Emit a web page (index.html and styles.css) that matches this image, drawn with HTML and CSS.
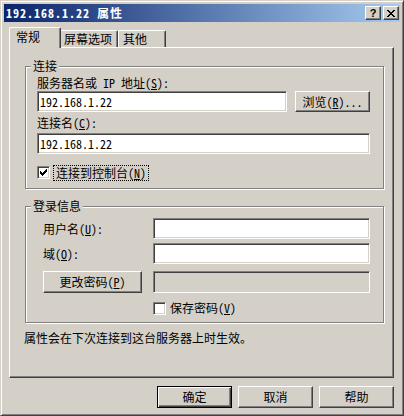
FILE: index.html
```html
<!DOCTYPE html>
<html lang="zh-CN">
<head>
    <meta charset="UTF-8">
    <title>192.168.1.22 属性</title>
    <link rel="stylesheet" href="styles.css">
</head>
<body>
    <div class="window">
        <div class="titlebar">
            <span class="title">192.168.1.22 属性</span>
            <div class="caption-buttons">
                <button class="caption-btn">?</button>
                <button class="caption-btn">
                    <svg width="8" height="7" viewBox="0 0 8 7" shape-rendering="crispEdges">
                        <path d="M0 0h2v1h1v1h2v-1h1v-1h2v1h-1v1h-1v1h-1v1h1v1h1v1h1v1h-2v-1h-1v-1h-2v1h-1v1h-2v-1h1v-1h1v-1h1v-1h-1v-1h-1z" fill="#000"/>
                    </svg>
                </button>
            </div>
        </div>

        <div class="client">
            <div class="tabs">
                <div class="tab selected">常规</div>
                <div class="tab">屏幕选项</div>
                <div class="tab">其他</div>
            </div>

            <div class="tab-panel">
                <fieldset class="group connect">
                    <legend>连接</legend>
                    <div class="group-body">
                        <div class="field-label">服务器名或 IP 地址(<u>S</u>):</div>
                        <div class="row">
                            <input class="textbox" type="text" value="192.168.1.22">
                            <button class="btn browse">浏览(<u>R</u>)...</button>
                        </div>
                        <div class="field-label second">连接名(<u>C</u>):</div>
                        <input class="textbox wide" type="text" value="192.168.1.22">
                        <div class="check-row console">
                            <span class="checkbox">
                                <svg width="7" height="7" viewBox="0 0 7 7" shape-rendering="crispEdges">
                                    <path d="M0 2h1v1h1v1h1v-1h1v-1h1v-1h1v-1h1v3h-1v1h-1v1h-1v1h-1v1h-1v-1h-1v-1h-1z" fill="#000"/>
                                </svg>
                            </span>
                            <span class="focus-label">连接到控制台(<u>N</u>)</span>
                        </div>
                    </div>
                </fieldset>

                <fieldset class="group login">
                    <legend>登录信息</legend>
                    <div class="group-body">
                        <div class="login-row">
                            <span class="login-label">用户名(<u>U</u>):</span>
                            <input class="textbox" type="text">
                        </div>
                        <div class="login-row">
                            <span class="login-label">域(<u>O</u>):</span>
                            <input class="textbox" type="text">
                        </div>
                        <div class="login-row pw-row">
                            <span class="login-label"><button class="btn change-pw">更改密码(<u>P</u>)</button></span>
                            <input class="textbox disabled" type="password" disabled>
                        </div>
                        <div class="login-row save-row">
                            <span class="checkbox"></span>
                            <span class="check-text">保存密码(<u>V</u>)</span>
                        </div>
                    </div>
                </fieldset>

                <p class="note">属性会在下次连接到这台服务器上时生效。</p>
            </div>

            <div class="dialog-buttons">
                <button class="btn default">确定</button>
                <button class="btn">取消</button>
                <button class="btn">帮助</button>
            </div>
        </div>
    </div>
</body>
</html>
```

FILE: styles.css
```css
* {
    box-sizing: border-box;
}

body {
    margin: 0;
    font-family: "Noto Sans Mono CJK SC", "Noto Sans CJK SC", sans-serif;
    font-size: 12px;
    line-height: 14px;
    color: #000;
    background-color: #d4d0c8;
}

u {
    text-underline-offset: 1px;
}

.window {
    width: 404px;
    height: 416px;
    padding: 3px;
    background-color: #d4d0c8;
    border: 1px solid;
    border-color: #d4d0c8 #404040 #404040 #d4d0c8;
    box-shadow: inset 1px 1px #fff, inset -1px -1px #808080;
}

.titlebar {
    height: 18px;
    padding: 0 1px 0 2px;
    display: flex;
    justify-content: space-between;
    align-items: center;
    color: white;
    background: linear-gradient(to right, #0a246a, #a6caf0);
}

.title {
    font-weight: bold;
    letter-spacing: 1px;
}

.caption-buttons {
    display: flex;
    gap: 2px;
}

.caption-btn {
    width: 16px;
    height: 14px;
    padding: 0;
    display: flex;
    justify-content: center;
    align-items: center;
    font: bold 11px "Liberation Sans", sans-serif;
    color: #000;
    background-color: #d4d0c8;
    border: 1px solid;
    border-color: #fff #404040 #404040 #fff;
    box-shadow: inset -1px -1px #808080;
}

.client {
    padding: 5px 6px 0 5px;
}

/* tab strip */
.tabs {
    height: 20px;
    padding-left: 2px;
    display: flex;
    align-items: flex-end;
}

.tab {
    height: 17px;
    min-width: 48px;
    padding: 1px 5px 0 4px;
    white-space: nowrap;
    background-color: #d4d0c8;
    border: 1px solid;
    border-bottom: none;
    border-color: #fff #404040 #fff #fff;
    border-radius: 2px 2px 0 0;
    box-shadow: inset -1px 0 #808080;
}

.tab.selected {
    position: relative;
    z-index: 1;
    height: 21px;
    min-width: 52px;
    margin: 0 -2px -1px -2px;
    padding: 2px 7px 0 6px;
}

.tab-panel {
    height: 331px;
    padding: 11px 9px 0 15px;
    border: 1px solid;
    border-color: #fff #404040 #404040 #fff;
    box-shadow: inset -1px -1px #808080;
}

/* group boxes */
.group {
    margin: 0;
    padding: 0;
    min-width: 0;
    border: 1px solid #808080;
    box-shadow: 1px 1px #fff, inset 1px 1px #fff;
}

.group legend {
    margin-left: 5px;
    padding: 0 2px;
    line-height: 14px;
    background-color: #d4d0c8;
}

.connect {
    margin-bottom: 10px;
}

.connect .group-body {
    padding: 3px 13px 7px 11px;
}

.login .group-body {
    padding: 5px 13px 7px 17px;
}

.field-label {
    height: 14px;
    margin-bottom: 1px;
}

.field-label.second {
    margin-top: 4px;
    margin-bottom: 3px;
}

.row {
    display: flex;
    gap: 8px;
}

.textbox {
    display: block;
    height: 21px;
    padding: 0 2px;
    font: inherit;
    color: #000;
    background-color: #fff;
    border: 1px solid;
    border-color: #808080 #fff #fff #808080;
    box-shadow: inset 1px 1px #404040, inset -1px -1px #d4d0c8;
    outline: none;
}

.row .textbox {
    flex: 1;
    min-width: 0;
}

.textbox.wide {
    width: 100%;
}

.textbox.disabled {
    height: 22px;
    background-color: #d4d0c8;
}

.btn {
    height: 22px;
    padding: 0;
    font: inherit;
    color: #000;
    background-color: #d4d0c8;
    border: 1px solid;
    border-color: #fff #404040 #404040 #fff;
    box-shadow: inset -1px -1px #808080;
}

.btn.default {
    border-color: #000;
    box-shadow: inset 1px 1px #fff, inset -1px -1px #404040, inset -2px -2px #808080;
}

.btn.browse {
    width: 75px;
    height: 21px;
}

.btn.change-pw {
    width: 99px;
}

/* checkboxes */
.check-row {
    display: flex;
    align-items: flex-start;
}

.console {
    margin-top: 11px;
}

.checkbox {
    width: 13px;
    height: 13px;
    flex: none;
    display: flex;
    justify-content: center;
    align-items: center;
    background-color: #fff;
    border: 1px solid;
    border-color: #808080 #fff #fff #808080;
    box-shadow: inset 1px 1px #404040, inset -1px -1px #d4d0c8;
}

.console .checkbox {
    margin-top: 1px;
    margin-right: 3px;
}

.focus-label {
    padding: 0 2px;
    border: 1px dotted #000;
}

.login-row {
    display: flex;
    align-items: center;
}

.login-row + .login-row {
    margin-top: 4px;
}

.login-row.pw-row {
    margin-top: 7px;
}

.login-row.save-row {
    margin-top: 8px;
    padding-left: 110px;
}

.login-label {
    width: 110px;
    flex: none;
}

.login-row .textbox {
    flex: 1;
    min-width: 0;
}

.check-text {
    margin-left: 4px;
}

.note {
    margin: 8px 0 0 -1px;
}

.dialog-buttons {
    margin-top: 8px;
    display: flex;
    justify-content: flex-end;
    gap: 6px;
}

.dialog-buttons .btn {
    width: 75px;
}
```
